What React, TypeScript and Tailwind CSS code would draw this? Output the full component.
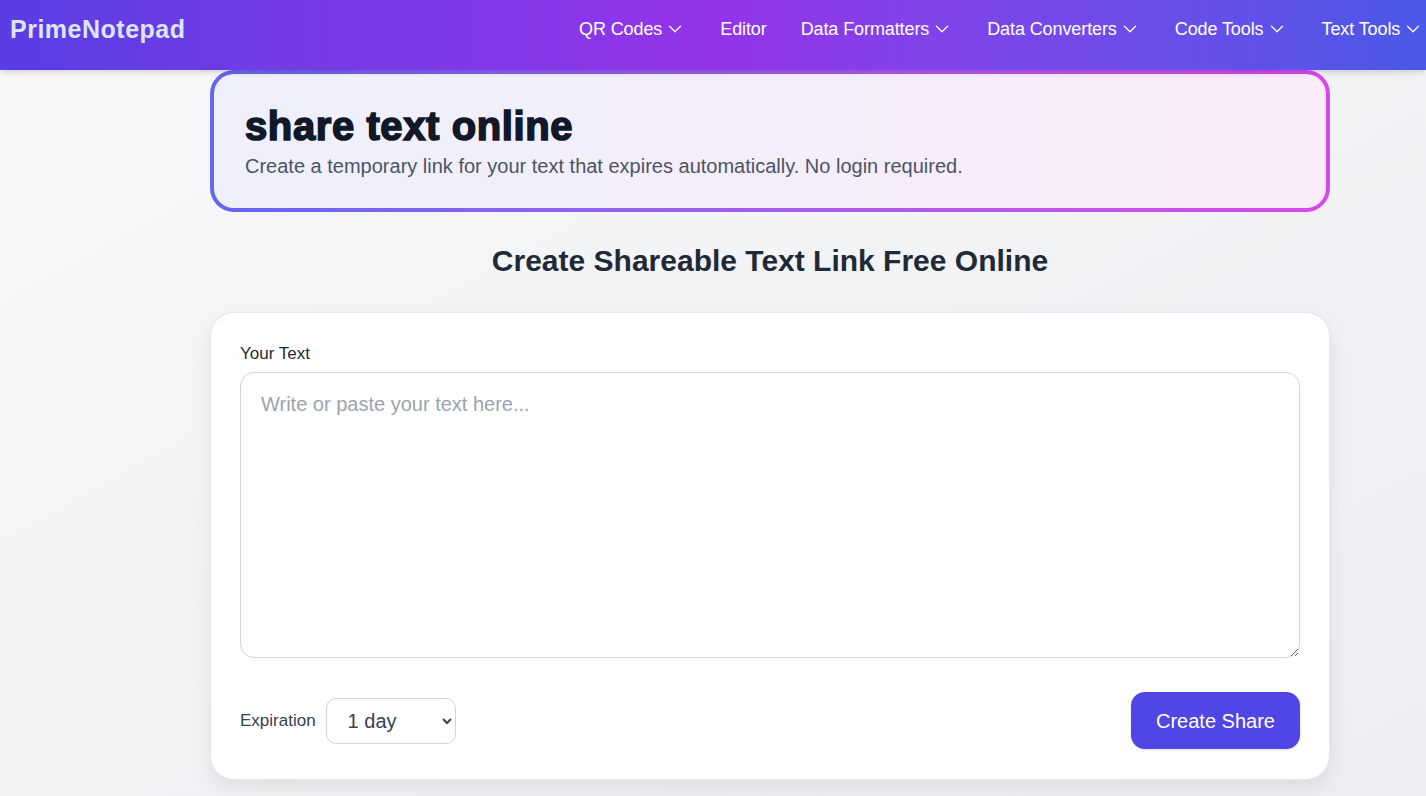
import React from 'react';
import { ChevronDown } from 'lucide-react';

const navItems = [
  { label: 'QR Codes', menu: true },
  { label: 'Editor', menu: false },
  { label: 'Data Formatters', menu: true },
  { label: 'Data Converters', menu: true },
  { label: 'Code Tools', menu: true },
  { label: 'Text Tools', menu: true },
];

const Header: React.FC = () => (
  <header className="h-[70px] w-full bg-gradient-to-r from-[#5a3de3] via-[#9333ea] to-[#4a58e8] flex items-start pt-[14px] pl-[10px] shadow-md relative z-10 overflow-hidden">
    <a href="#" className="w-[569px] shrink-0 text-[25px] leading-[30px] font-bold text-[#dbe6fe] tracking-[0.5px] whitespace-nowrap">PrimeNotepad</a>
    <nav className="flex items-center gap-[34px] pt-[1px] text-white text-[18px] leading-[28px] tracking-[-0.1px] whitespace-nowrap">
      {navItems.map((item) => (
        <button key={item.label} className="flex items-center gap-[2px]">
          <span>{item.label}</span>
          {item.menu && <ChevronDown size={22} strokeWidth={1.4} />}
        </button>
      ))}
    </nav>
  </header>
);

export default function App() {
  return (
    <div className="min-h-screen bg-gradient-to-br from-[#f8f8f9] to-[#eceef1] font-['Liberation_Sans',Arial,sans-serif] overflow-hidden">
      <Header />

      <main className="w-[1120px] ml-[210px]">
        {/* Hero banner */}
        <section className="h-[142px] rounded-[24px] bg-gradient-to-r from-[#6366f1] to-[#d946ef] p-[4px]">
          <div className="h-full rounded-[20px] bg-gradient-to-r from-[#eff0fd] to-[#fbebfb] pl-[31px] pt-[28px]">
            <h1 className="text-[40px] leading-[48px] font-black text-[#111827] tracking-[0.6px] [-webkit-text-stroke:1.6px_#111827]">share text online</h1>
            <p className="text-[20px] text-[#4b5563] mt-[1px]">Create a temporary link for your text that expires automatically. No login required.</p>
          </div>
        </section>

        <h2 className="text-center text-[30px] font-bold text-[#1f2937] mt-[29px] mb-[31px] leading-[40px]">
          Create Shareable Text Link Free Online
        </h2>

        {/* Form card */}
        <section className="bg-white rounded-[24px] border border-[#e5e7eb] shadow-[0_8px_20px_rgba(0,0,0,0.08)] px-[29px] pt-[31px] pb-[30px]">
          <label className="block text-[17px] leading-[20px] text-[#1f2937] mb-[8px]">Your Text</label>
          <textarea
            placeholder="Write or paste your text here..."
            className="block w-full h-[286px] rounded-[14px] border border-[#d1d5db] px-[20px] py-[16px] text-[20px] placeholder:text-[#9ca3af] outline-none resize-y"
          />
          <div className="flex items-center justify-between mt-[34px]">
            <div className="flex items-center gap-[10px]">
              <span className="text-[17px] text-[#374151]">Expiration</span>
              <select className="w-[130px] h-[46px] rounded-[10px] border border-[#d1d5db] pl-[17px] pr-[8px] text-[20px] text-[#374151] bg-white">
                <option>1 day</option>
                <option>7 days</option>
                <option>30 days</option>
              </select>
            </div>
            <button className="w-[169px] h-[57px] rounded-[14px] bg-[#4f46e5] text-white text-[20px] shadow-sm">
              Create Share
            </button>
          </div>
        </section>
      </main>
    </div>
  );
}
